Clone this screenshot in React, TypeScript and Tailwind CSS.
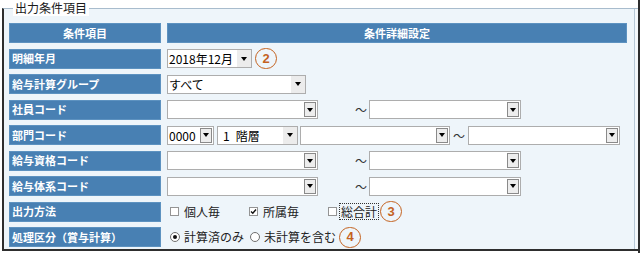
import React from "react";

const font = "font-['Noto_Sans_CJK_JP','Noto_Sans',sans-serif]";

type SelectProps = { className: string; value?: React.ReactNode; plain?: boolean };

const Arrow = ({ plain }: { plain?: boolean }) =>
  plain ? (
    <div className="flex w-[14px] items-center justify-center bg-[#ececec]">
      <span className="h-0 w-0 border-x-[3.5px] border-t-[4px] border-x-transparent border-t-black" />
    </div>
  ) : (
    <div className="my-px mr-px flex w-[12px] items-center justify-center border border-[#8a8a8a] bg-[#ededed]">
      <span className="h-0 w-0 border-x-[3px] border-t-[4px] border-x-transparent border-t-black" />
    </div>
  );

const Select = ({ className, value = "", plain }: SelectProps) => (
  <div className={`flex h-[19px] shrink-0 border border-[#adadad] bg-white ${className}`}>
    <span className="flex-1 overflow-hidden whitespace-nowrap pl-px text-[12px] leading-[17px] text-black">{value}</span>
    <Arrow plain={plain} />
  </div>
);

const Tilde = ({ className }: { className: string }) => (
  <span className={`w-[12px] shrink-0 text-[12px] leading-[19px] text-[#333] ${className}`}>～</span>
);

const Num = ({ n, className }: { n: string; className: string }) => (
  <span
    className={`flex h-[21px] w-[22px] shrink-0 items-center justify-center rounded-full border-[1.5px] border-[#c4621f] font-['Liberation_Sans',sans-serif] text-[13px] font-bold text-[#c4621f] ${className}`}
  >
    {n}
  </span>
);

const Check = ({ checked, className }: { checked?: boolean; className: string }) => (
  <span className={`flex h-[9px] w-[9px] shrink-0 items-center justify-center border border-[#949494] bg-white ${className}`}>
    {checked && (
      <svg width="7" height="7" viewBox="0 0 7 7">
        <path d="M1 3.5 L2.8 5.3 L6 1.5" fill="none" stroke="#111" strokeWidth="1.4" />
      </svg>
    )}
  </span>
);

const Radio = ({ on, className }: { on?: boolean; className: string }) => (
  <span className={`flex h-[10px] w-[10px] shrink-0 items-center justify-center rounded-full border border-[#6f6f6f] bg-white ${className}`}>
    {on && <span className="h-[4px] w-[4px] rounded-full bg-[#111]" />}
  </span>
);

const Label = ({ children, center }: { children: React.ReactNode; center?: boolean }) => (
  <div
    className={`flex items-center border border-[#5d92c0] bg-[#4880b3] text-[11px] font-bold text-white ${
      center ? "justify-center" : "pl-[2px]"
    }`}
  >
    {children}
  </div>
);

const Cell = ({ children }: { children: React.ReactNode }) => (
  <div className="flex items-center">{children}</div>
);

export default function App() {
  return (
    <div className={`h-[253px] w-[640px] overflow-hidden border-r-2 border-[#2e2e2e] bg-white ${font}`}>
      <fieldset className="ml-[2px] h-[251px] w-[636px] border-t border-l-2 border-b-2 border-t-[#a8bccd] border-l-[#2e2e2e] border-b-[#2e2e2e] bg-[#eef5fa] pt-[7px] pl-[5px] shadow-[inset_-3px_0_0_#f4f8fb,inset_-4px_0_0_#b7c8d6]">
        <legend className="ml-[4px] bg-white px-[2px] text-[12px] leading-[16px] text-[#1a1a1a]">出力条件項目</legend>
        <div className="grid grid-cols-[152px_460px] auto-rows-[20px] gap-x-[6px] gap-y-[5.5px]">
          <Label center>条件項目</Label>
          <Label center>条件詳細設定</Label>

          <Label>明細年月</Label>
          <Cell>
            <Select className="w-[85px]" value="2018年12月" plain />
            <Num n="2" className="ml-[3px]" />
          </Cell>

          <Label>給与計算グループ</Label>
          <Cell>
            <Select className="w-[139px]" value="すべて" plain />
          </Cell>

          <Label>社員コード</Label>
          <Cell>
            <Select className="w-[151px]" />
            <Tilde className="ml-[37px]" />
            <Select className="ml-[2px] w-[152px]" />
          </Cell>

          <Label>部門コード</Label>
          <Cell>
            <Select className="w-[47px]" value="0000" />
            <Select
              className="ml-[3px] w-[81px]"
              value={
                <span className="pl-[4px]">
                  1<span className="ml-[6px]">階層</span>
                </span>
              }
              plain
            />
            <Select className="ml-[2px] w-[150px]" />
            <Tilde className="ml-[3px]" />
            <Select className="ml-[3px] w-[152px]" />
          </Cell>

          <Label>給与資格コード</Label>
          <Cell>
            <Select className="w-[151px]" />
            <Tilde className="ml-[37px]" />
            <Select className="ml-[2px] w-[152px]" />
          </Cell>

          <Label>給与体系コード</Label>
          <Cell>
            <Select className="w-[151px]" />
            <Tilde className="ml-[37px]" />
            <Select className="ml-[2px] w-[152px]" />
          </Cell>

          <Label>出力方法</Label>
          <Cell>
            <Check className="ml-[3px]" />
            <span className="ml-[5px] text-[12px] text-[#222]">個人毎</span>
            <Check checked className="ml-[29px]" />
            <span className="ml-[5px] text-[12px] text-[#222]">所属毎</span>
            <Check className="ml-[29px]" />
            <span className="ml-[2px] border border-dotted border-[#333] px-px text-[12px] leading-[15px] text-[#222]">総合計</span>
            <Num n="3" className="ml-[1px]" />
          </Cell>

          <Label>処理区分（賞与計算）</Label>
          <Cell>
            <Radio on className="ml-[3px]" />
            <span className="ml-[4px] text-[12px] text-[#222]">計算済のみ</span>
            <Radio className="ml-[6px]" />
            <span className="ml-[4px] text-[12px] text-[#222]">未計算を含む</span>
            <Num n="4" className="ml-[3px]" />
          </Cell>
        </div>
      </fieldset>
    </div>
  );
}
